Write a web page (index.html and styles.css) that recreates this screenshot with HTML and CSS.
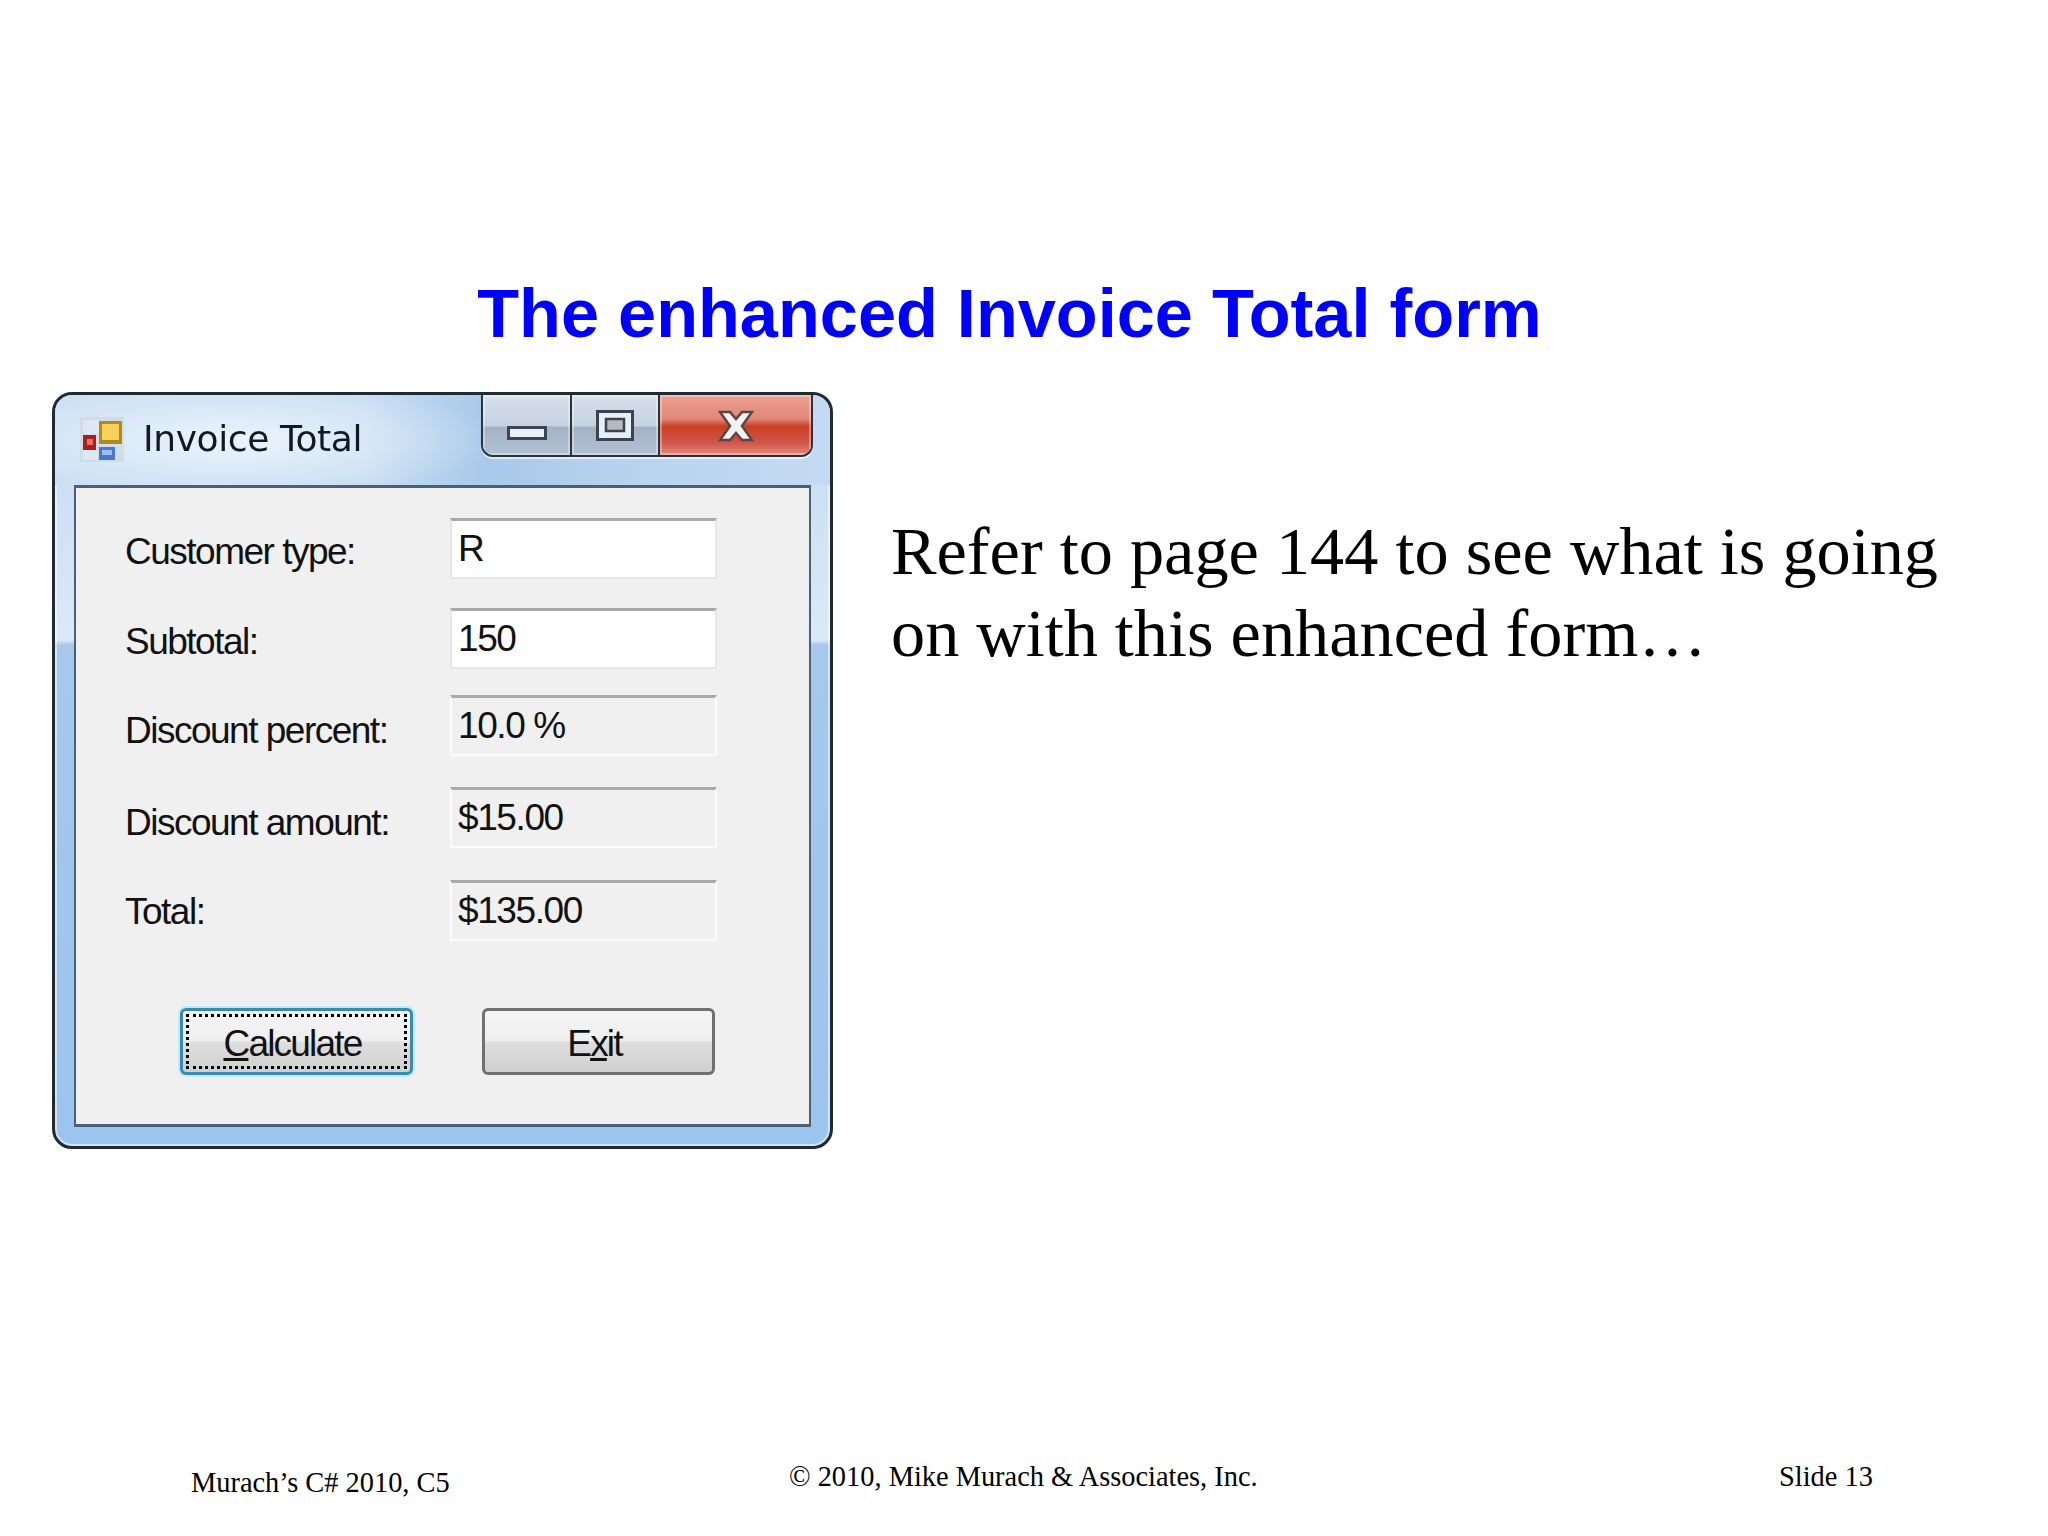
FILE: index.html
```html
<!DOCTYPE html>
<html lang="en">

<head>
    <meta charset="UTF-8">
    <meta name="viewport" content="width=device-width, initial-scale=1.0">
    <title>The enhanced Invoice Total form</title>
    <link rel="stylesheet" href="styles.css">
</head>

<body>
    <div class="slide">
        <h1 class="slide-title">The enhanced Invoice Total form</h1>

        <div class="slide-body">
            <div class="window">
                <div class="titlebar">
                    <svg class="app-icon" width="44" height="45" viewBox="0 0 44 45">
                        <rect x="0" y="0" width="44" height="45" fill="#c9d3de" opacity="0.55"/>
                        <rect x="3" y="3" width="17" height="14" fill="#dfe8f2"/>
                        <rect x="3" y="33" width="15" height="10" fill="#dfe8f2"/>
                        <rect x="3" y="18" width="13" height="15" fill="#a81f1f"/>
                        <rect x="7" y="22" width="6" height="6" fill="#e8706a"/>
                        <rect x="19" y="4" width="23" height="23" fill="#b08a20"/>
                        <rect x="22" y="7" width="17" height="16" fill="#f7d25a"/>
                        <rect x="19" y="30" width="16" height="13" fill="#4a78c8"/>
                        <rect x="22" y="33" width="10" height="5" fill="#9dbcf0"/>
                    </svg>
                    <span class="window-title">Invoice Total</span>
                    <div class="caption-buttons">
                        <div class="caption-btn caption-min">
                            <svg width="40" height="14" viewBox="0 0 40 14">
                                <rect x="1.5" y="1.5" width="37" height="11" fill="#e8f1f8" stroke="#3b4450" stroke-width="3"/>
                            </svg>
                        </div>
                        <div class="caption-btn caption-max">
                            <svg width="38" height="31" viewBox="0 0 38 31">
                                <rect x="1.5" y="1.5" width="35" height="28" fill="#e6eef6" stroke="#3b4450" stroke-width="3"/>
                                <rect x="10" y="9" width="18" height="12" fill="#b4bac2" stroke="#3b4450" stroke-width="2.5"/>
                            </svg>
                        </div>
                        <div class="caption-btn caption-close">
                            <svg width="36" height="32" viewBox="0 0 36 32">
                                <polygon points="2,2 12,2 18,9 24,2 34,2 24,16 34,30 24,30 18,23 12,30 2,30 12,16" fill="#f4f2f0" stroke="#5a4744" stroke-width="2.5"/>
                            </svg>
                        </div>
                    </div>
                </div>

                <div class="client">
                    <div class="fields">
                        <label class="field-label">Customer type:</label>
                        <div class="textbox">R</div>
                        <label class="field-label">Subtotal:</label>
                        <div class="textbox">150</div>
                        <label class="field-label field-label-low">Discount percent:</label>
                        <div class="textbox textbox-readonly">10.0 %</div>
                        <label class="field-label field-label-low">Discount amount:</label>
                        <div class="textbox textbox-readonly">$15.00</div>
                        <label class="field-label field-label-high">Total:</label>
                        <div class="textbox textbox-readonly">$135.00</div>
                    </div>
                    <div class="buttons">
                        <div class="win-btn win-btn-focus"><span class="focus-box"><u>C</u>alculate</span></div>
                        <div class="win-btn">E<u>x</u>it</div>
                    </div>
                </div>
            </div>

            <p class="slide-text">Refer to page 144 to see what is going on with this enhanced form…</p>
        </div>

        <div class="slide-footer">
            <span class="footer-left">Murach’s C# 2010, C5</span>
            <span class="footer-center">© 2010, Mike Murach &amp; Associates, Inc.</span>
            <span class="footer-right">Slide 13</span>
        </div>
    </div>
</body>

</html>
```
FILE: styles.css
```css
html, body {
    margin: 0;
    padding: 0;
    background-color: #fff;
}

.slide {
    width: 2048px;
    height: 1536px;
    display: flex;
    flex-direction: column;
    overflow: hidden;
}

.slide-title {
    margin: 275px 0 0;
    padding-right: 29px;
    text-align: center;
    font-family: "Liberation Sans", Arial, sans-serif;
    font-size: 68.5px;
    line-height: 78px;
    font-weight: bold;
    color: #0000ff;
}

.slide-body {
    display: flex;
    align-items: flex-start;
    margin-top: 39px;
    padding-left: 52px;
}

.slide-text {
    width: 1100px;
    margin: 118px 0 0 58px;
    font-family: "Liberation Serif", "Times New Roman", serif;
    font-size: 68.3px;
    line-height: 82px;
    color: #000;
}

/* the screenshot of the form */
.window {
    width: 781px;
    height: 757px;
    box-sizing: border-box;
    display: flex;
    flex-direction: column;
    padding: 0 19px 19px 19px;
    border: 3px solid #1f2a33;
    border-radius: 20px;
    background: linear-gradient(to bottom, #c4daf1 0, #dbe9f7 245px, #a6c8ec 250px, #9bc4ee 100%);
    box-shadow: inset 0 0 0 2px rgba(255, 255, 255, 0.55);
    filter: blur(0.7px);
    font-family: "Liberation Sans", Arial, sans-serif;
    color: #111;
}

.titlebar {
    height: 90px;
    margin: 0 -19px;
    padding: 0 17px 0 25px;
    display: flex;
    align-items: flex-start;
    flex-shrink: 0;
    border-radius: 18px 18px 0 0;
    background:
        radial-gradient(ellipse 260px 60px at 180px 45px, rgba(240, 247, 253, 0.9), rgba(240, 247, 253, 0) 100%),
        linear-gradient(to right, #cbdff3 0, #c6dcf2 40%, #a8c9ea 56%, #b9d3ee 75%, #c4daf2 100%);
}

.app-icon {
    margin-top: 22px;
    flex-shrink: 0;
}

.window-title {
    margin: 21px 0 0 19px;
    font-family: "DejaVu Sans", sans-serif;
    font-size: 36px;
    line-height: 46px;
    letter-spacing: -0.4px;
    color: #111827;
}

.caption-buttons {
    margin-left: auto;
    display: flex;
    height: 60px;
    border: 2.5px solid #2c333b;
    border-top: none;
    border-radius: 0 0 12px 12px;
    overflow: hidden;
    box-shadow: 0 2px 0 rgba(255, 255, 255, 0.6);
}

.caption-btn {
    display: flex;
    justify-content: center;
    padding-top: 15px;
    box-sizing: border-box;
    background: linear-gradient(to bottom, #d6e0ea 0, #c5d2df 52%, #a3b2c5 53%, #b2c1d2 100%);
    box-shadow: inset 0 0 0 2px rgba(255, 255, 255, 0.35);
}

.caption-min {
    width: 89px;
    padding-top: 31px;
    border-right: 2.5px solid #2c333b;
}

.caption-max {
    width: 88px;
    border-right: 2.5px solid #2c333b;
}

.caption-close {
    width: 151px;
    background: linear-gradient(to bottom, #ec9e90 0, #e08878 40%, #c93f25 52%, #d0574a 80%, #e08a7a 100%);
}

.client {
    flex: 1;
    box-sizing: border-box;
    padding: 30px 0 0 49px;
    border: 2px solid #4c6074;
    border-top-width: 3px;
    border-bottom-width: 3px;
    background-color: #f0f0f0;
}

.fields {
    display: grid;
    grid-template-columns: 325px 267px;
    grid-template-rows: 90px 87px 92px 93px 62px;
    align-items: start;
}

.field-label {
    padding-top: 12px;
    font-size: 37px;
    line-height: 44px;
    letter-spacing: -1.5px;
    white-space: nowrap;
}

.field-label-low {
    padding-top: 14px;
}

.field-label-high {
    padding-top: 10px;
}

.textbox {
    height: 61px;
    box-sizing: border-box;
    padding: 6px 0 0 6px;
    font-size: 37px;
    line-height: 44px;
    letter-spacing: -1.4px;
    background-color: #fff;
    border: 2px solid #e6e6e6;
    border-top: 3px solid #a9a9a9;
}

.textbox-readonly {
    background-color: #f0f0f0;
    border-color: #fafafa;
    border-top-color: #a9a9a9;
}

.buttons {
    display: flex;
    gap: 69px;
    margin: 66px 0 0 55px;
}

.win-btn {
    width: 233px;
    height: 67px;
    box-sizing: border-box;
    display: flex;
    align-items: center;
    justify-content: center;
    padding: 4px 8px 0 0;
    font-size: 37px;
    letter-spacing: -1.8px;
    border: 3px solid #707070;
    border-radius: 6px;
    background: linear-gradient(to bottom, #f4f4f4 0, #efefef 48%, #dedede 52%, #cfcfcf 100%);
}

.win-btn-focus {
    padding: 3px;
    border-color: #3a8aad;
    box-shadow: 0 0 0 2px #bfeaf8;
}

.focus-box {
    flex: 1;
    align-self: stretch;
    display: flex;
    align-items: center;
    justify-content: center;
    padding: 4px 8px 0 0;
    border: 3px dotted #000;
}

.focus-box u {
    text-decoration-thickness: 3px;
}

.slide-footer {
    margin-top: auto;
    height: 75px;
    display: flex;
    align-items: flex-start;
    font-family: "Liberation Serif", "Times New Roman", serif;
    font-size: 28.4px;
    line-height: 32px;
    color: #000;
}

.footer-left {
    margin: 6px 0 0 191px;
    width: 598px;
}

.footer-center {
    width: 990px;
}
```
